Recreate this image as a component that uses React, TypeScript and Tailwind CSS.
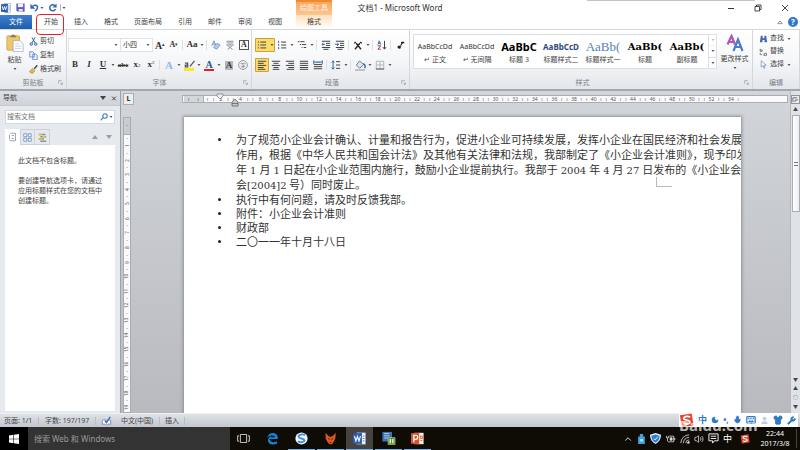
import React from 'react';
import clsx from 'clsx';
import { Mic, Shirt, Wrench, Keyboard, Moon, User, Volume2, ChevronUp } from 'lucide-react';

interface ToolProps {
  label: string;
  active?: boolean;
  arrow?: boolean;
  children: React.ReactNode;
}

const Caret = () => (
  <span className="flex w-[6px] shrink-0 items-center justify-center">
    <svg viewBox="0 0 6 4" className="h-[2px] w-[4px]" fill="#555">
      <path d="M0 0h6L3 4z" />
    </svg>
  </span>
);

const Tool: React.FC<ToolProps> = ({ label, active, arrow, children }) => (
  <button
    aria-label={label}
    className={clsx(
      'flex h-[14px] shrink-0 items-center rounded-[1px]',
      active && 'bg-[#fbdc6c] outline outline-1 -outline-offset-1 outline-[#c9a03c]'
    )}
  >
    <span className="flex w-[14px] items-center justify-center">{children}</span>
    {arrow && <Caret />}
  </button>
);

const Sep = () => <span className="mx-px h-[10px] w-[2px] shrink-0 border-l border-[#dcdfe3]" />;

// 线条类图标统一使用 12x12 画布
const Lines: React.FC<{ d: string; color?: string; children?: React.ReactNode }> = ({ d, color = '#444', children }) => (
  <svg viewBox="0 0 12 12" className="h-[10px] w-[10px]" fill="none" stroke={color} strokeWidth={1.2}>
    <path d={d} />
    {children}
  </svg>
);

const SogouLogo = ({ className }: { className: string }) => (
  <svg viewBox="0 0 16 16" className={className}>
    <path d="M1 2.500 13.500 0.500 15.500 13 3 15.500z" fill="#e2452f" />
    <path d="M12 4.200C8 2.800 4.800 4 5 6s6.500 1.300 6.600 3.600c.1 2-3.600 2.800-7 1.500" fill="none" stroke="#fff" strokeWidth={1.900} />
  </svg>
);

const WordLogo = ({ className }: { className: string }) => (
  <svg viewBox="0 0 16 16" className={className}>
    <rect x="5" y="1" width="10.500" height="14" fill="#f4f8fd" stroke="#7b9fd3" strokeWidth={0.800} />
    <path d="M12 5h2M12 8h2M12 11h2" stroke="#2f62ad" strokeWidth={1} />
    <path d="M0 2 11 1v14L0 14z" fill="#2c5fb0" />
    <path d="M1.800 5 3.600 11 5.500 5.500 7.400 11 9.200 5" fill="none" stroke="#fff" strokeWidth={1.400} />
  </svg>
);

const TABS = ['开始', '插入', '格式', '页面布局', '引用', '邮件', '审阅', '视图'];

const STYLES = [
  { sample: 'AaBbCcDd', name: '↵ 正文', cls: 'text-[7px] text-[#333]' },
  { sample: 'AaBbCcDd', name: '↵ 无间隔', cls: 'text-[7px] text-[#333]' },
  { sample: 'AaBbC', name: '标题 3', cls: 'text-[11px] font-bold text-black' },
  { sample: 'AaBbCcD', name: '标题样式二', cls: 'text-[8px] font-bold text-[#2c4a7c]' },
  { sample: 'AaBb(', name: '标题样式一', cls: "text-[13px] text-[#5381b8] font-['Liberation_Serif',serif]" },
  { sample: 'AaBb(', name: '标题', cls: "text-[10px] font-bold text-black font-['DejaVu_Serif',serif]" },
  { sample: 'AaBb(', name: '副标题', cls: "text-[10px] font-bold text-black font-['DejaVu_Serif',serif]" },
];

const TitleBar = () => (
  <header className="relative flex h-[15px] shrink-0 items-center bg-white pl-px">
    <div className="flex w-[72px] items-center gap-[3px]">
      <WordLogo className="h-[10px] w-[10px] shrink-0" />
      <button aria-label="保存" className="shrink-0 px-[2px]">
        <svg viewBox="0 0 12 12" className="h-[9px] w-[9px]">
          <path d="M0.500 0.500h11v11h-9l-2-2z" fill="#5a5fb5" />
          <path d="M2.500 0.500h7v5h-7z" fill="#eef1fb" />
          <path d="M3.500 8h5.500v3.500H3.500z" fill="#dfe3f5" />
        </svg>
      </button>
      <button aria-label="撤消" className="flex shrink-0 items-center">
        <svg viewBox="0 0 12 12" className="h-[9px] w-[9px]">
          <path d="M3 5C6 1.500 10.500 3 10 6.500 9.700 8.500 8 10 6.500 11" fill="none" stroke="#3566b5" strokeWidth={2} />
          <path d="M0.500 1v6.500H7z" fill="#3566b5" />
        </svg>
        <Caret />
      </button>
      <button aria-label="重复" className="flex shrink-0 items-center">
        <svg viewBox="0 0 12 12" className="h-[9px] w-[9px]">
          <path d="M9 3.500A4 4 0 1 0 10 8" fill="none" stroke="#3566b5" strokeWidth={2} />
          <path d="M11.500 0.500v5.500H6z" fill="#3566b5" />
        </svg>
      </button>
      <span className="flex h-[7px] items-center border-l border-[#bbb]">
        <Caret />
      </span>
    </div>
    <h1 className="flex-1 text-center text-[8px] leading-[14px] text-[#333]">文档1 - Microsoft Word</h1>
    <div className="flex w-[73px] items-center justify-between pr-[11px]">
      <button aria-label="最小化">
        <svg viewBox="0 0 8 8" className="h-[8px] w-[8px]" stroke="#333" strokeWidth={1}>
          <path d="M1 4.500h6" />
        </svg>
      </button>
      <button aria-label="还原">
        <svg viewBox="0 0 8 8" className="h-[8px] w-[8px]" fill="none" stroke="#333" strokeWidth={0.900}>
          <path d="M1 2.500h4.500V7H1zM2.500 2.500V1H7v4.500H5.500" />
        </svg>
      </button>
      <button aria-label="关闭">
        <svg viewBox="0 0 8 8" className="h-[8px] w-[8px]" stroke="#333" strokeWidth={0.900}>
          <path d="M1 1l6 6M7 1L1 7" />
        </svg>
      </button>
    </div>
    <div className="absolute top-0 right-[45px] h-px w-[168px] bg-[#c4c4c4]" />
  </header>
);

const TabBar = () => (
  <nav className="flex h-[15px] shrink-0 items-stretch border-b border-[#d5d9de] bg-white text-[7px] leading-[14px] text-[#444]">
    <button className="mr-1 w-[32px] bg-linear-to-b from-[#3f7fd0] to-[#1f5cae] text-white">文件</button>
    {TABS.map((tab, i) => (
      <button key={tab} className="relative px-2">
        {tab}
        {i === 0 && <span className="absolute -top-px left-0 z-10 h-[21px] w-[28px] rounded-[4px] border border-[#e5202b]" />}
      </button>
    ))}
    <button className="relative ml-[6px] w-[36px] bg-linear-to-b from-[#fde0bd] to-white">
      格式
      <span className="absolute -top-[15px] left-0 h-[15px] w-[36px] border-t-2 border-[#f08a2c] bg-linear-to-b from-[#f9a55c] to-[#fcc78f] text-[7px] leading-[11px] text-[#fff4e4]">
        绘图工具
      </span>
    </button>
    <div className="ml-auto flex items-center gap-[5px] pr-[2px]">
      <button aria-label="功能区最小化">
        <svg viewBox="0 0 8 6" className="h-[5px] w-[6px]" fill="none" stroke="#777">
          <path d="M1 4.500 4 1l3 3.500z" />
        </svg>
      </button>
      <button aria-label="帮助" className="flex h-[10px] w-[10px] items-center justify-center rounded-full bg-[#2f76cf] text-[8px] font-bold text-white">
        ?
      </button>
    </div>
  </nav>
);

const Group: React.FC<{ title: string; className: string; launcher?: boolean; children: React.ReactNode }> = ({
  title,
  className,
  launcher = true,
  children,
}) => (
  <section className={clsx('flex flex-col border-r border-[#d3d7dc]', className)}>
    <div className="min-h-0 flex-1">{children}</div>
    <div className="relative h-[12px] text-center text-[7px] leading-[11px] text-[#7a8089]">
      {title}
      {launcher && (
        <button aria-label={title + '选项'} className="absolute right-[3px] bottom-[4px]">
          <svg viewBox="0 0 8 8" className="h-[5px] w-[5px]" fill="none" stroke="#9097a0">
            <path d="M1 6V1h5M4 4l3 3M7 4v3H4" />
          </svg>
        </button>
      )}
    </div>
  </section>
);

const Clipboard = () => (
  <Group title="剪贴板" className="w-[67px]">
    <div className="flex pt-[4px] text-[7px] text-[#444]">
      <button className="flex w-[29px] flex-col items-center leading-[10px]">
        <svg viewBox="0 0 20 20" className="h-[18px] w-[18px]">
          <rect x="1" y="2" width="14" height="16" rx="1" fill="#f0c66b" stroke="#c9984a" strokeWidth={0.800} />
          <path d="M5 3.500V2h1.500a1.500 1.500 0 0 1 3 0H11v1.500z" fill="#777" />
          <path d="M8 7.500h7.500L19 11v8.500H8z" fill="#fff" stroke="#8ba3c7" strokeWidth={0.700} />
          <path d="M10 11h5M10 13.500h7M10 16h7" stroke="#a9bcd8" strokeWidth={0.700} />
        </svg>
        <span className="pt-[3px]">粘贴</span>
        <span className="flex h-[8px] items-center">
          <Caret />
        </span>
      </button>
      <div className="flex flex-col">
        <button className="flex h-[14px] items-center gap-[2px]">
          <svg viewBox="0 0 12 12" className="h-[9px] w-[9px]" fill="none" stroke="#2f5fa8" strokeWidth={1.300}>
            <path d="M4 0.500 8 8M8 0.500 4 8" />
            <circle cx="3" cy="9.500" r="1.600" />
            <circle cx="9" cy="9.500" r="1.600" />
          </svg>
          剪切
        </button>
        <button className="flex h-[14px] items-center gap-[2px]">
          <svg viewBox="0 0 12 12" className="h-[9px] w-[9px]" fill="#e8f0fb" stroke="#4f7fc0" strokeWidth={1}>
            <path d="M1 1h4l2 2v5H1zM5 4h4l2 2v5.500H5z" />
          </svg>
          复制
        </button>
        <button className="flex h-[14px] items-center gap-[2px]">
          <svg viewBox="0 0 12 12" className="h-[9px] w-[9px]">
            <path d="M11 0.500 7 5" stroke="#444" strokeWidth={2} />
            <path d="M4.500 4.500 8 7.500 4.500 11.500 0.500 9z" fill="#e0b64f" stroke="#8c6b26" strokeWidth={0.600} />
          </svg>
          格式刷
        </button>
      </div>
    </div>
  </Group>
);

const FontGroup = () => (
  <Group title="字体" className="w-[185px] pl-px">
    <div className="flex flex-col gap-[6px] pt-[8px] font-['Liberation_Serif','Noto_Sans_CJK_SC',serif] text-[#333]">
      <div className="flex h-[14px] items-center">
        <div className="flex h-[14px] w-[53px] items-center border border-[#dfe2e6] bg-white">
          <input aria-label="字体" className="w-[44px] text-[7px]" />
          <Caret />
        </div>
        <div className="flex h-[14px] w-[32px] items-center border border-l-0 border-[#dfe2e6] bg-white">
          <input aria-label="字号" defaultValue="小四" className="w-[24px] pl-[2px] text-[7px]" />
          <Caret />
        </div>
        <Tool label="增大字体"><span className="text-[10px] font-bold">A</span><span className="text-[5px]">▴</span></Tool>
        <Tool label="缩小字体"><span className="text-[8px] font-bold">A</span><span className="text-[5px]">▾</span></Tool>
        <Sep />
        <Tool label="更改大小写" arrow><span className="text-[9px] font-bold">Aa</span></Tool>
        <Sep />
        <Tool label="清除格式">
          <svg viewBox="0 0 12 12" className="h-[10px] w-[10px]">
            <path d="M1 7 3.500 1 6 7M2 5h3" fill="none" stroke="#5c7fb0" />
            <path d="M7 4 11 6 7 11 3 9z" fill="#b9c9e8" stroke="#6b83b5" strokeWidth={0.800} />
          </svg>
        </Tool>
        <Tool label="拼音指南">
          <Lines d="M2 1.500h8M2 3.500h8M1.500 6h9M6 4.500V6M3 6.500 9 11.500M9 6.500 3 11.500" color="#8b929b" />
        </Tool>
        <Tool label="字符边框"><span className="border border-[#555] px-px text-[8px] leading-[8px] font-bold">A</span></Tool>
      </div>
      <div className="flex h-[14px] items-center">
        <Tool label="加粗"><span className="text-[9px] font-bold">B</span></Tool>
        <Tool label="倾斜"><span className="text-[9px] font-bold italic">I</span></Tool>
        <Tool label="下划线" arrow><span className="text-[9px] font-bold underline">U</span></Tool>
        <Tool label="删除线"><span className="text-[7px] font-bold line-through">abc</span></Tool>
        <Tool label="下标"><span className="text-[9px] font-bold">x</span><sub className="text-[5px]">2</sub></Tool>
        <Tool label="上标"><span className="text-[9px] font-bold">x</span><sup className="text-[5px]">2</sup></Tool>
        <Sep />
        <Tool label="文本效果" arrow><span className="text-[11px] font-bold text-[#8fb8e6]">A</span></Tool>
        <Tool label="突出显示" arrow>
          <svg viewBox="0 0 12 12" className="h-[11px] w-[11px]">
            <path d="M0 8.500h11v3.500H0z" fill="#f2ea2b" />
            <path d="M11.500 1 6.500 7M1 3.500h3v4H1.500V5.500H4" fill="none" stroke="#555" strokeWidth={1.400} />
          </svg>
        </Tool>
        <Tool label="字体颜色" arrow>
          <span className="border-b-2 border-[#e0202a] px-px text-[10px] leading-[9px] font-bold text-[#31518c]">A</span>
        </Tool>
        <Tool label="字符底纹"><span className="bg-[#b4b7bb] px-px text-[9px] leading-[9px] font-bold">A</span></Tool>
        <Tool label="带圈字符">
          <Lines d="M3.500 5V4h5v1M4.500 6h3L6 7.500V10M3.500 8h5" color="#9a9fa6">
            <circle cx="6" cy="6" r="5.300" />
          </Lines>
        </Tool>
      </div>
    </div>
  </Group>
);

const ParagraphGroup = () => (
  <Group title="段落" className="w-[158px] pl-[3px]">
    <div className="flex flex-col gap-[6px] pt-[8px]">
      <div className="flex items-center">
        <Tool label="项目符号" active arrow><Lines d="M4 2.500h7M4 6h7M4 9.500h7M1 2.500h1.500M1 6h1.500M1 9.500h1.500" /></Tool>
        <Tool label="编号" arrow>
          <Lines d="M5 2.500h6M5 6h6M5 9.500h6"><path d="M2 1v10" stroke="#3a67ad" strokeDasharray="2.500 1.200" /></Lines>
        </Tool>
        <Tool label="多级列表" arrow><Lines d="M1 2h2M4 2h5M3.500 5.500h1.500M6 5.500h5M5.500 9h1M8 9h3" /></Tool>
        <Sep />
        <Tool label="减少缩进量">
          <Lines d="M1 1.500h10M6 4h5M6 6.500h5M1 9h10M3 11.200h6"><path d="M5 5.200H1.500M3 3.500 1 5.200 3 7" stroke="#3a67ad" /></Lines>
        </Tool>
        <Tool label="增加缩进量">
          <Lines d="M1 1.500h10M6 4h5M6 6.500h5M1 9h10M3 11.200h6"><path d="M0 5.200h4M2.500 3.500 4.500 5.200 2.500 7" stroke="#3a67ad" /></Lines>
        </Tool>
        <Sep />
        <Tool label="中文版式" arrow>
          <svg viewBox="0 0 12 12" className="h-[9px] w-[10px]" fill="none" stroke="#222" strokeWidth={1.800}>
            <path d="M1 3 3 1.500M9 1.500 11 3M2 11 8.500 3M10 11 3.500 3M6 6v2" />
          </svg>
        </Tool>
        <Sep />
        <Tool label="排序">
          <Lines d="M9 1v9.500M7 8.500l2 2.500 2-2.500">
            <path d="M1 5.500 2.800 1l1.700 4.500M1.500 4h2.500" stroke="#3a67ad" />
            <path d="M1 7h3.500L1 11h3.500" stroke="#a5404a" />
          </Lines>
        </Tool>
        <Sep />
        <Tool label="显示编辑标记">
          <svg viewBox="0 0 12 12" className="h-[9px] w-[9px]">
            <path d="M5 10.500 8 1.500M7 5 9.500 2" stroke="#222" strokeWidth={1.200} />
            <circle cx="4" cy="8" r="2" fill="#222" />
            <path d="M7 1h4v2H7z" fill="#222" />
          </svg>
        </Tool>
      </div>
      <div className="flex items-center">
        <Tool label="左对齐" active><Lines d="M1 1.500h10M1 4h7M1 6.500h10M1 9h7M1 11.200h9" /></Tool>
        <Tool label="居中"><Lines d="M1 1.500h10M3 4h6M1 6.500h10M3 9h6M2 11.200h8" /></Tool>
        <Tool label="右对齐"><Lines d="M1 1.500h10M4 4h7M1 6.500h10M4 9h7M2 11.200h9" /></Tool>
        <Tool label="两端对齐"><Lines d="M1 1.500h10M1 4h10M1 6.500h10M1 9h10M1 11.200h10" /></Tool>
        <Tool label="分散对齐">
          <Lines d="M1 5.500h10M1 8h10M1 10.500h10"><path d="M1 0.500v4M11 0.500v4M2.500 2.500h7" stroke="#3a67ad" strokeWidth={1.600} /></Lines>
        </Tool>
        <Sep />
        <Tool label="行距" arrow>
          <Lines d="M6 2h5M6 6h5M6 10h5"><path d="M2.500 1v10M1 3l1.500-2L4 3M1 9l1.500 2L4 9" stroke="#3a67ad" /></Lines>
        </Tool>
        <Sep />
        <Tool label="底纹" arrow>
          <svg viewBox="0 0 12 12" className="h-[11px] w-[11px]">
            <path d="M5 1 9.500 5 5 9 1.500 5.500z" fill="#dfe6f0" stroke="#66758c" />
            <path d="M9 4c2 1 2.500 3 1.500 5" fill="none" stroke="#3a67ad" strokeWidth={1.500} />
            <path d="M0 10h11v2H0z" fill="#b9bfc8" />
          </svg>
        </Tool>
        <Tool label="边框" arrow><Lines d="M1.500 1.500h9v9M1.500 1.500v9M6 1.500v9M1.500 6h9" color="#b4b9c0"><path d="M1 10.800h10" stroke="#444" /></Lines></Tool>
      </div>
    </div>
  </Group>
);

const StylesGroup = () => (
  <Group title="样式" className="min-w-0 flex-1 pl-[3px]">
    <div className="flex pt-[4px] text-[7px] text-[#444]">
      <div className="flex h-[35px] min-w-0 flex-1 border border-[#dcdfe4] bg-white">
        {STYLES.map((s, i) => (
          <button key={i} className="flex min-w-0 flex-1 flex-col items-center px-px pt-[4px]">
            <span className={clsx('text-center leading-[15px] whitespace-nowrap', s.cls)}>{s.sample}</span>
            <span className="leading-[11px] whitespace-nowrap">{s.name}</span>
          </button>
        ))}
        <div className="flex w-[8px] flex-col divide-y divide-[#dcdfe4] border-l border-[#dcdfe4]">
          <button aria-label="上一行" className="flex flex-1 items-center justify-center opacity-40"><Caret /></button>
          <button aria-label="下一行" className="flex flex-1 items-center justify-center"><Caret /></button>
          <button aria-label="其他" className="flex flex-1 items-center justify-center"><Caret /></button>
        </div>
      </div>
      <button className="flex w-[35px] flex-col items-center">
        <svg viewBox="0 0 18 18" className="h-[19px] w-[18px]" fill="none" strokeWidth={2.200}>
          <path d="M1.500 10 5.500 1.500 9 10M3 7.500h5" stroke="#b455b5" />
          <path d="M7.500 16.500 12 5l4.500 11.500M9 12.500h6" stroke="#4a7cc7" />
        </svg>
        <span className="leading-[11px] whitespace-nowrap">更改样式</span>
        <span className="flex h-[8px] items-center"><Caret /></span>
      </button>
    </div>
  </Group>
);

const EditGroup = () => (
  <Group title="编辑" className="w-[47px]" launcher={false}>
    <div className="flex flex-col pt-[2px] pl-[6px] text-[7px] text-[#444]">
      <button className="flex h-[13px] items-center gap-[2px]">
        <svg viewBox="0 0 12 12" className="h-[8px] w-[9px]" fill="#4469ad">
          <path d="M2 1h2.500l.5 4h2l.5-4H10l1.500 10h-4V7.500h-3V11h-4z" />
        </svg>
        查找 <Caret />
      </button>
      <button className="flex h-[13px] items-center gap-[2px]">
        <svg viewBox="0 0 12 12" className="h-[8px] w-[9px]" fill="none" stroke="#666" strokeWidth={1.200}>
          <path d="M1 1v4h3V3H1M6 11h4.500V8H7v3" />
          <path d="M1 7v3h3" stroke="#3a8a4a" />
        </svg>
        替换
      </button>
      <button className="flex h-[13px] items-center gap-[2px]">
        <svg viewBox="0 0 12 12" className="h-[9px] w-[9px]" fill="#fff" stroke="#7089b5">
          <path d="M3 1v8.500l2-2L6.500 11 8 10.300 6.500 7H9.500z" />
        </svg>
        选择 <Caret />
      </button>
    </div>
  </Group>
);

const NavPane = () => (
  <aside className="flex w-[121px] shrink-0 flex-col border-r border-[#9ea3aa] bg-[#e6e9ee] text-[7px] text-[#444]">
    <div className="flex h-[15px] items-center border-b border-[#c5c9d0] bg-linear-to-b from-[#dde0e6] to-[#d0d4da] px-[3px]">
      <span>导航</span>
      <button aria-label="窗格选项" className="ml-auto">
        <svg viewBox="0 0 6 4" className="h-[4px] w-[6px]" fill="#444"><path d="M0 0h6L3 4z" /></svg>
      </button>
      <button aria-label="关闭窗格" className="ml-[5px]">
        <svg viewBox="0 0 8 8" className="h-[5px] w-[6px]" stroke="#444" strokeWidth={1.600}><path d="M1 1l6 6M7 1 1 7" /></svg>
      </button>
    </div>
    <div className="mx-[5px] mt-[4px] flex h-[14px] items-center border border-[#d5d9df] bg-white">
      <input aria-label="搜索文档" placeholder="搜索文档" className="min-w-0 flex-1 px-px placeholder:text-[#777]" />
      <svg viewBox="0 0 12 12" className="h-[8px] w-[8px]" fill="none" stroke="#3a77c0" strokeWidth={1.600}>
        <circle cx="7.500" cy="4.500" r="3.300" /><path d="M5 7 1 11" />
      </svg>
      <Caret />
    </div>
    <div className="mx-[5px] mt-[5px] flex h-[16px] items-stretch">
      <button aria-label="浏览标题" className="flex w-[15px] items-center justify-center bg-white">
        <svg viewBox="0 0 12 12" className="h-[10px] w-[9px]" fill="none" stroke="#7c8799"><path d="M3 1h7v10H2M2 3v6M5 4h3M5 8h3" /></svg>
      </button>
      <button aria-label="浏览页面" className="flex w-[15px] items-center justify-center border border-[#cdd1d8]">
        <svg viewBox="0 0 12 12" className="h-[9px] w-[9px]" fill="#fff" stroke="#5c82bb"><path d="M1 1h4v4H1zM7 1h4v4H7zM1 7h4v4H1zM7 7h4v4H7z" /></svg>
      </button>
      <button aria-label="浏览结果" className="flex w-[15px] items-center justify-center border border-l-0 border-[#cdd1d8]">
        <svg viewBox="0 0 12 12" className="h-[9px] w-[9px]" strokeWidth={2}><path d="M1 2h9M3 5h8M1 8h7M3 11h8" stroke="#8e939b" /><path d="M1 2h4M6 5h4M2 8h4" stroke="#e3c53c" /></svg>
      </button>
      <span className="ml-auto flex items-center gap-[8px] pr-[3px]">
        <button aria-label="上一标题">
          <svg viewBox="0 0 6 4" className="h-[4px] w-[6px]" fill="#9a9ea5"><path d="M0 4h6L3 0z" /></svg>
        </button>
        <button aria-label="下一标题">
          <svg viewBox="0 0 6 4" className="h-[4px] w-[6px]" fill="#9a9ea5"><path d="M0 0h6L3 4z" /></svg>
        </button>
      </span>
    </div>
    <div className="mx-[5px] mb-[2px] flex-1 bg-white px-[13px] pt-[11px] leading-[10px]">
      <p>此文档不包含标题。</p>
      <p className="-mr-[6px] mt-[10px]">要创建导航选项卡，请通过应用标题样式在您的文档中创建标题。</p>
    </div>
  </aside>
);

const H_MARKS = Array.from({ length: 27 }, (_, i) => (i + 1) * 2);
const V_MARKS = Array.from({ length: 19 }, (_, i) => i + 1);

const VerticalRuler = () => (
  <div className="flex w-[14px] shrink-0 flex-col overflow-hidden pt-[2px] pl-[2px]">
    <button aria-label="制表符" className="flex h-[12px] w-[11px] shrink-0 items-center justify-center border border-[#a9aeb5] bg-[#eceef1] text-[7px] font-bold text-[#333]">
      L
    </button>
    <div className="mt-[12px] flex min-h-0 w-[8px] flex-1 flex-col overflow-hidden border border-[#a9adb3] bg-[#fafafa] text-[5px] text-[#555]">
      <div className="h-[17px] shrink-0 border-b border-[#a9adb3] bg-[#c9ccd1] text-center leading-[15px]">-</div>
      <div className="flex min-h-0 flex-1 flex-col">
        {V_MARKS.map((n) => (
          <div key={n} className="flex min-h-0 flex-1 flex-col items-center">
            <span className="h-[7px] leading-[7px]">-</span>
            <span className="-rotate-90 leading-[7px]">{n}</span>
          </div>
        ))}
      </div>
    </div>
  </div>
);

const HorizontalRuler = () => (
  <div className="relative mt-[4px] mr-[2px] ml-[47px] flex h-[8px] border border-[#a9adb3] bg-[#fafafa] pr-[46px] pl-px text-[5px] leading-[6px] text-[#555]">
    <div className="flex w-[20px] shrink-0 justify-around border-r border-[#a9adb3] bg-[#d3d6da]">
      <span>ı</span><span>ı</span>
    </div>
    <span className="w-[7px] shrink-0 text-center">ı</span>
    {H_MARKS.map((n) => (
      <div key={n} className="flex min-w-0 flex-1 justify-between px-[2px]">
        <span>ı</span>
        <span>{n}</span>
        <span>ı</span>
      </div>
    ))}
    <svg viewBox="0 0 24 14" className="absolute -top-[3px] left-[33px] h-[14px] w-[24px]" fill="#eceef1" stroke="#777" strokeWidth={0.700}>
      <path d="M1 1h6v2L4 6 1 3z" />
      <path d="M16 13V9l3-3 3 3v4zM16 10.500h6" fill="#c5c8cc" stroke="#555" />
    </svg>
  </div>
);

const Num = ({ children }: { children: React.ReactNode }) => (
  <span className="mx-[3px] font-['DejaVu_Serif',serif] text-[10px] leading-none">{children}</span>
);

const Bullet = () => (
  <span className="flex h-[14px] w-[18px] shrink-0 items-center">
    <span className="h-[3px] w-[3px] rounded-full bg-[#222]" />
  </span>
);

const ITEMS = ['执行中有何问题，请及时反馈我部。', '附件：小企业会计准则', '财政部', '二〇一一年十月十八日'];

const Page = () => (
  <article className="mx-[49px] mt-[14px] flex-1 overflow-hidden bg-white pt-[15px] pl-[34px] font-['Noto_Sans_CJK_SC',sans-serif] text-[11px] whitespace-nowrap text-[#333] shadow-[0_0_3px_1px_#8b8e93]">
    <ul>
      <li className="flex leading-[15px]">
        <Bullet />
        <div>
          <p className="h-[15px]">为了规范小企业会计确认、计量和报告行为，促进小企业可持续发展，发挥小企业在国民经济和社会发展</p>
          <p className="h-[15px]">作用，根据《中华人民共和国会计法》及其他有关法律和法规，我部制定了《小企业会计准则》，现予印发</p>
          <p className="h-[15px]">年<Num>1</Num>月<Num>1</Num>日起在小企业范围内施行，鼓励小企业提前执行。我部于<Num>2004</Num>年<Num>4</Num>月<Num>27</Num>日发布的《小企业会计</p>
          <p className="relative h-[15px]">
            会<span className="font-['DejaVu_Serif',serif] text-[10px] leading-none">[2004]2</span> 号）同时废止。
            <span className="absolute top-0 left-[420px] h-[10px] w-[16px] border-b border-l border-[#bbb]" />
          </p>
        </div>
      </li>
      {ITEMS.map((item) => (
        <li key={item} className="flex leading-[14px]">
          <Bullet />
          {item}
        </li>
      ))}
    </ul>
  </article>
);

const ScrollBar = () => (
  <div className="flex w-[10px] shrink-0 flex-col items-center border-l border-[#b5b9bf] bg-[#dfe2e6] pb-[2px] text-[5px] text-[#444]">
    <button aria-label="标尺" className="mt-[4px] h-[9px] w-[9px] border border-[#8f949b] bg-[#eceef1]">
      <svg viewBox="0 0 8 8" fill="none" stroke="#666"><path d="M1 7V2h5M3.500 7V4.500H7" /></svg>
    </button>
    <button aria-label="向上" className="h-[11px]">▲</button>
    <div className="flex h-[97px] w-[8px] items-center justify-center border border-[#a9adb3] bg-linear-to-r from-white to-[#eceef1]">
      <span className="h-[4px] w-[4px] border-y border-[#777]" />
    </div>
    <button aria-label="向下" className="mt-auto h-[9px]">▼</button>
    <button aria-label="上一页" className="h-[9px]">▲</button>
    <button aria-label="选择浏览对象" className="h-[9px]">○</button>
    <button aria-label="下一页" className="h-[9px]">▼</button>
  </div>
);

const ImeBar = () => (
  <div className="absolute right-[2px] bottom-0 flex h-[14px] w-[119px] items-center justify-between bg-white pr-[2px] text-[#2f78c4]">
    <SogouLogo className="h-[15px] w-[15px]" />
    <span className="text-[9px] font-bold">中</span>
    <Moon className="h-[8px] w-[8px]" fill="#2f78c4" />
    <span className="text-[8px] font-bold">•,</span>
    <Mic className="h-[10px] w-[9px]" fill="#2f78c4" />
    <Keyboard className="h-[10px] w-[10px]" strokeWidth={3} />
    <User className="h-[9px] w-[9px] text-[#b9cfe4]" fill="#b9cfe4" />
    <Shirt className="h-[10px] w-[10px]" fill="#2f78c4" />
    <Wrench className="h-[9px] w-[9px]" fill="#2f78c4" />
    <span className="absolute -bottom-[6px] left-0 z-10 text-[15px] leading-[16px] font-bold text-white/70">Baidu.com</span>
  </div>
);

const StatusBar = () => (
  <footer className="relative flex h-[14px] shrink-0 items-center border-t border-[#eef0f2] bg-linear-to-b from-[#dfe2e6] to-[#c3c8ce] pl-[4px] text-[7px] text-[#444]">
    <span className="w-[35px] border-r border-[#b9bdc3] leading-[8px]">页面: 1/1</span>
    <span className="w-[57px] border-r border-[#b9bdc3] pl-[6px] leading-[8px]">字数: 197/197</span>
    <svg viewBox="0 0 12 12" className="mx-[5px] h-[10px] w-[11px]">
      <path d="M1 5c2-1 3.500-.5 5 .5 1.500-1 3-1 5-.5v5c-2-.5-3.500-.3-5 .7-1.500-1-3-1.200-5-.7z" fill="#fff" stroke="#5c7fbb" />
      <path d="M4 5.500 6 8l4.500-7" fill="none" stroke="#3e63b3" strokeWidth={1.500} />
    </svg>
    <span className="w-[43px] border-r border-[#b9bdc3] pl-[4px] leading-[8px]">中文(中国)</span>
    <span className="w-[25px] border-r border-[#b9bdc3] pl-[5px] leading-[8px]">插入</span>
    <ImeBar />
  </footer>
);

const APP_CELL = 'flex w-[27px] items-center justify-center border-b';

const TaskBar = () => (
  <div className="flex h-[23px] shrink-0 items-stretch bg-[#0f0b05] text-white">
    <button aria-label="开始菜单" className="flex w-[28px] items-center justify-center bg-black">
      <svg viewBox="0 0 12 12" className="h-[10px] w-[10px]" fill="#fff">
        <path d="M0 1.700 5.200 1v4.700H0zM5.900.9 12 0v5.700H5.900zM0 6.300h5.200V11L0 10.300zM5.900 6.300H12V12l-6.100-.9z" />
      </svg>
    </button>
    <input
      aria-label="搜索"
      placeholder="搜索 Web 和 Windows"
      className="w-[202px] bg-[#333] px-[6px] text-[8px] placeholder:text-[#999]"
    />
    <button aria-label="任务视图" className={clsx(APP_CELL, 'border-transparent')}>
      <svg viewBox="0 0 14 10" className="h-[9px] w-[13px]" fill="none" stroke="#ddd"><path d="M3.500 0.500h7v9h-7zM2 2H.500v6H2M12 2h1.500v6H12" /></svg>
    </button>
    <div className="flex flex-1 gap-[2px] pl-[2px]">
      <button aria-label="Edge" className={clsx(APP_CELL, 'border-transparent')}>
        <svg viewBox="0 0 16 16" className="h-[13px] w-[13px]">
          <path d="M3.500 8.500h11C15 4 12 1.300 8.500 1.300 5 1.300 2 3.500 1.500 7.500 3.500 5 5.500 4.300 8 4.300c1.800 0 3 1 3 2.200H5.500c.3-.9.700-1.400 1.500-2C4 5.500 2.500 8 2.500 10.500c0 3.500 3 5 6 5 1.800 0 3.700-.5 5-1.200v-3c-1.500 1-3 1.300-4.500 1.300-2.300 0-3.800-1.200-3.900-3.100" fill="#1783d8" />
        </svg>
      </button>
      <button aria-label="搜狗浏览器" className={clsx(APP_CELL, 'border-[#76b3e4]')}>
        <svg viewBox="0 0 16 16" className="h-[13px] w-[13px]">
          <circle cx="8" cy="8" r="7.500" fill="#f3f8fd" />
          <path d="M12.500 4C9 1.800 4 3.500 4.500 6S11 7.500 11.500 10s-4.500 3.500-8 1.500" fill="none" stroke="#3f8fdc" strokeWidth={2.400} />
        </svg>
      </button>
      <button aria-label="FoxPro" className={clsx(APP_CELL, 'border-[#76b3e4]')}>
        <svg viewBox="0 0 16 16" className="h-[13px] w-[13px]">
          <path d="M2 1l3.500 4L8 6l3-1.500L14.500 1l-.5 7-2 4-2 3H6.500L4 12 2 8z" fill="#d8591e" />
          <path d="M5 8l2 1M11 8 9 9M7 13h2" stroke="#5c2008" strokeWidth={1.200} />
        </svg>
      </button>
      <button aria-label="Word" className={clsx(APP_CELL, 'border-[#76b3e4] bg-[#45423f]')}>
        <WordLogo className="h-[13px] w-[13px]" />
      </button>
      <button aria-label="录屏" className={clsx(APP_CELL, 'border-[#76b3e4]')}>
        <svg viewBox="0 0 16 16" className="h-[14px] w-[15px]">
          <path d="M1 1h11v11H1z" fill="#3c73b5" />
          <path d="M3 3h6M3 5.500h6M3 8h4" stroke="#b9d3ee" />
          <path d="M7.500 7.500h8v8h-8z" fill="#5b9227" stroke="#d6e3c3" strokeWidth={0.600} />
          <path d="M10 9v5M13 9v5" stroke="#fff" strokeWidth={1.400} />
        </svg>
      </button>
      <button aria-label="PowerPoint" className={clsx(APP_CELL, 'border-[#76b3e4]')}>
        <svg viewBox="0 0 16 16" className="h-[13px] w-[13px]">
          <path d="M4 1h11.500v14H4z" fill="#fbe9e2" />
          <path d="M0 1.500 10 1v14L0 14.500z" fill="#d4592e" />
          <path d="M3.500 12.500V4h2.300a2.300 2.300 0 0 1 0 5H3.500" fill="none" stroke="#fff" strokeWidth={1.500} />
          <path d="M11.500 5h2.500v3h-2.500zM11.500 10.500H14" fill="none" stroke="#d4592e" />
        </svg>
      </button>
    </div>
    <div className="flex items-center gap-[4px]">
      <ChevronUp className="h-[10px] w-[10px]" />
      <svg viewBox="0 0 10 12" className="h-[10px] w-[9px]"><path d="M3 0h4v3h2v9H1V3h2z" fill="#3fa1e0" /><path d="M3 6h4v3H3z" fill="#a9dcf8" /></svg>
      <svg viewBox="0 0 12 12" className="h-[11px] w-[11px]"><path d="M6 0l6 2c0 5-2 8-6 10C2 10 0 7 0 2z" fill="#e9f3fc" /><path d="M6 1.500 10.500 3C10.500 7 9 9 6 10.500 3 9 1.500 7 1.500 3z" fill="#2d7ad8" /><path d="M4 6l1.500 1.500L8.500 4" fill="none" stroke="#fff" /></svg>
      <svg viewBox="0 0 12 10" className="h-[8px] w-[11px]" fill="none" stroke="#ddd"><path d="M4.500 1.500H10v7H3M10 4h1.500v2H10" /><path d="M1 1v2.500h2.500V1M2.200 3.500V8" /><path d="M5.500 3.500h2.500v3H5.500z" fill="#ddd" /></svg>
      <svg viewBox="0 0 12 12" className="h-[10px] w-[10px]" fill="none" stroke="#ddd"><path d="M1 11A10 10 0 0 1 11 1M4 11a7 7 0 0 1 7-7M7 11a4 4 0 0 1 4-4" /><path d="M9 11a2 2 0 0 1 2-2v2z" fill="#ddd" /></svg>
      <Volume2 className="h-[10px] w-[10px] text-[#ddd]" />
      <svg viewBox="0 0 12 12" className="h-[11px] w-[11px]" fill="none" stroke="#fff"><path d="M1 1h10v7.500H7L5 11V8.500H1zM3 3.500h6M3 6h6" /></svg>
      <span className="w-[11px] text-[9px]">中</span>
      <SogouLogo className="mx-[2px] h-[10px] w-[10px]" />
    </div>
    <div className="flex w-[44px] flex-col justify-center pr-[3px] pl-[5px] text-center text-[7px] leading-[10px] whitespace-nowrap">
      <time>22:44</time>
      <time>2017/3/8</time>
    </div>
    <span className="my-[2px] mr-[3px] w-px bg-[#444]" />
  </div>
);

const App: React.FC = () => (
  <div className="flex h-screen flex-col overflow-hidden bg-white font-['Noto_Sans','Noto_Sans_CJK_SC',sans-serif]">
    <TitleBar />
    <TabBar />
    <div className="flex h-[61px] shrink-0 border-b-2 border-[#a3a8af] bg-linear-to-b from-white via-[#f6f7f9] to-[#e3e6ea]">
      <Clipboard />
      <FontGroup />
      <ParagraphGroup />
      <StylesGroup />
      <EditGroup />
    </div>
    <main className="flex min-h-0 flex-1 bg-linear-to-b from-[#d2d5d9] to-[#b8babf]">
      <NavPane />
      <VerticalRuler />
      <div className="flex min-w-0 flex-1 flex-col">
        <HorizontalRuler />
        <Page />
      </div>
      <ScrollBar />
    </main>
    <StatusBar />
    <TaskBar />
  </div>
);

export default App;
